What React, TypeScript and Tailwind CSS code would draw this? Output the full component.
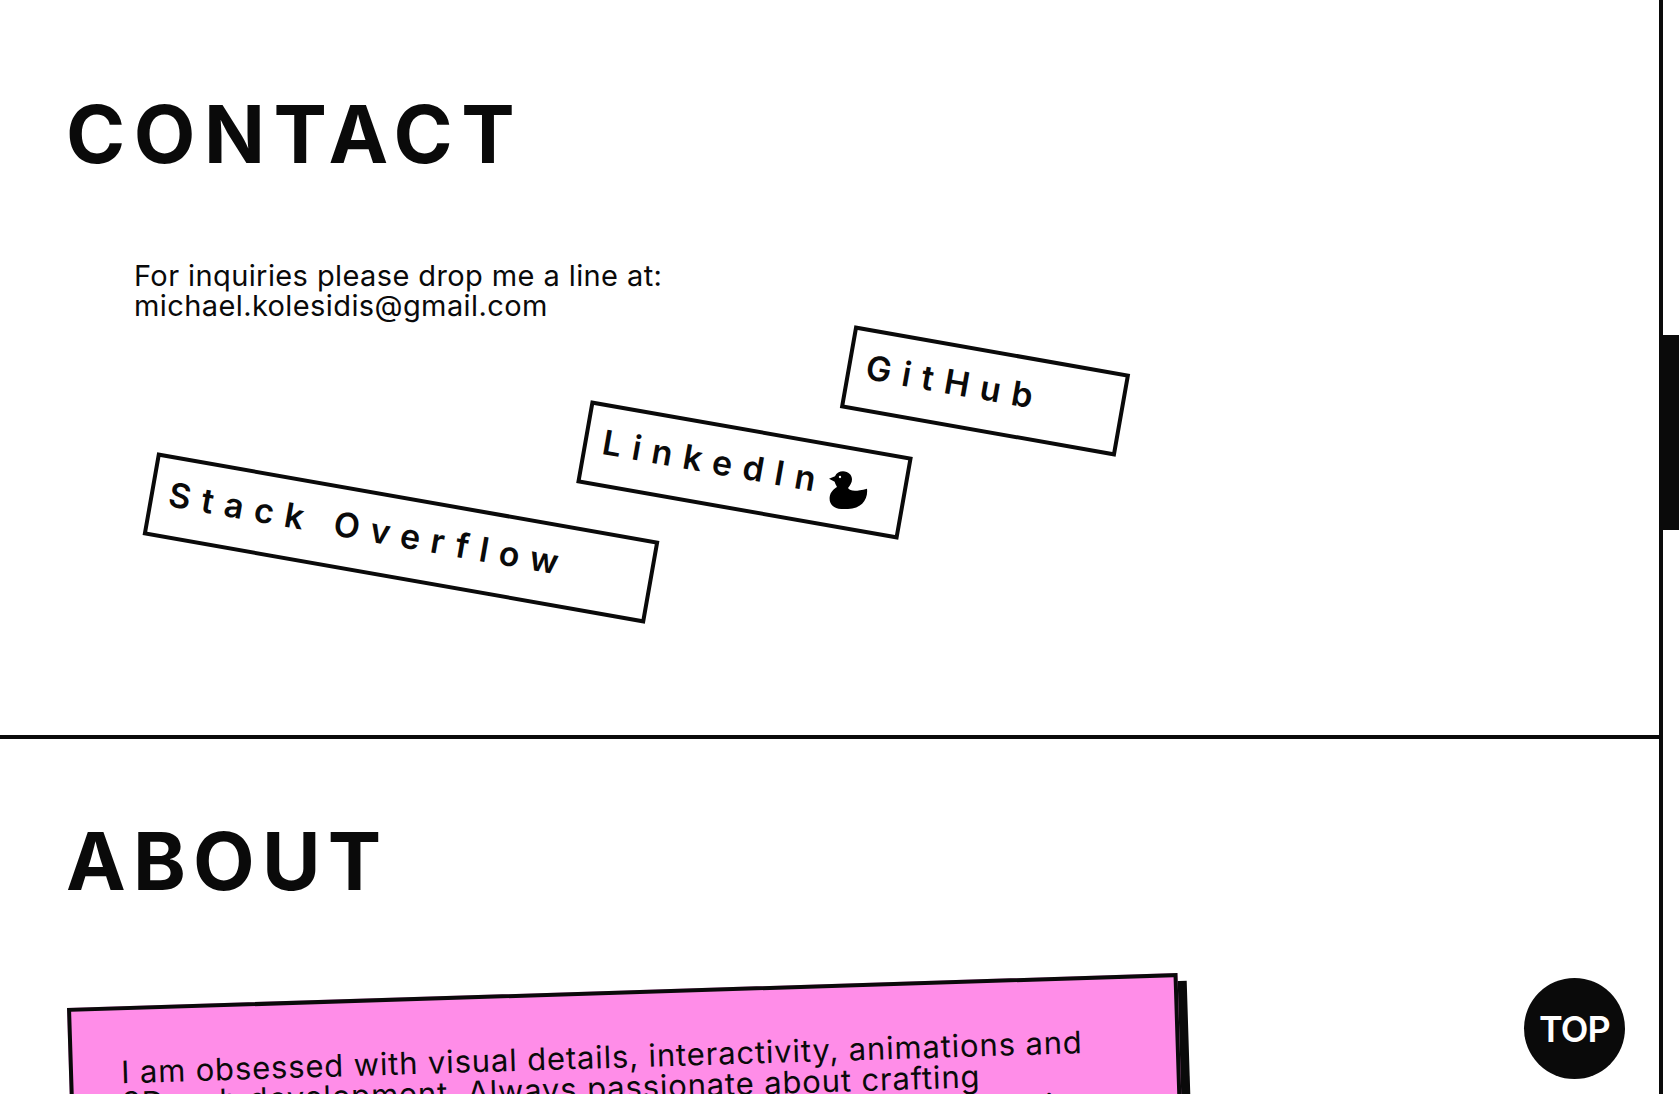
const bodyFont = "font-['Inter',sans-serif]";

function Duck() {
  return (
    <svg viewBox="145 90 120 118" className="absolute left-[828px] top-[470px] h-10 w-10">
      <path
        d="M148 115 L166 108 C170 98 180 93 190 93 C206 93 217 104 217 117 C217 127 212 135 205 143 C212 152 225 155 262 145 C266 178 245 205 205 206 L185 206 C160 204 148 190 150 170 C152 155 162 146 172 140 C168 132 166 128 165 124 Z"
        fill="#000"
      />
      <circle cx="181" cy="110" r="3.5" fill="#fff" />
    </svg>
  );
}

const links = [
  { label: 'GitHub', className: 'order-3 w-[280px] -ml-[63px] mt-0' },
  { label: 'LinkedIn', className: 'order-2 w-[327px] -ml-[75px] mt-[79px]' },
  { label: 'Stack Overflow', className: 'order-1 w-[510px] ml-[78px] mt-[147px]' },
];

export default function App() {
  return (
    <div className={`relative h-[1094px] overflow-hidden bg-white text-[#0a0a0a] ${bodyFont}`}>
      <main className="h-full w-[1663px] border-r-4 border-[#0a0a0a]">
        <section className="h-[739px] border-b-4 border-[#0a0a0a] px-[68px] pt-[88px]">
          <h2 className="-ml-[2px] text-[80px] font-bold leading-[92px] tracking-[8.6px]">CONTACT</h2>
          <p className="ml-[66px] mt-[81px] text-[29px] leading-[30px] tracking-[0.4px]">
            For inquiries please drop me a line at:
            <br />
            michael.kolesidis@gmail.com
          </p>
          <div className="mt-[28px] flex items-start">
            {links.map((link) => (
              <a
                key={link.label}
                href="#"
                className={`${link.className} block h-[84px] rotate-[10deg] border-4 border-[#0a0a0a] px-[15px] pt-[15px] text-[34px] font-semibold leading-[40px] tracking-[11px] whitespace-nowrap`}
              >
                {link.label}
              </a>
            ))}
          </div>
        </section>
        <section className="px-[68px] pt-[76px]">
          <h2 className="-ml-[2px] text-[80px] font-bold leading-[92px] tracking-[7.2px]">ABOUT</h2>
          <div className="relative mt-[101px] -ml-[1px] w-[1111px] -rotate-[1.8deg] origin-top-left border-4 border-[#0a0a0a] bg-[#ff8de8] px-12 pt-[46px] pb-12 text-[31px] leading-[31px] tracking-[0.85px] whitespace-nowrap shadow-[9px_8px_0_#0a0a0a]">
            <p>
              I am obsessed with visual details, interactivity, animations and
              <br />
              3D web development. Always passionate about crafting
              <br />
              immersive and playful digital experiences, and making all things
            </p>
          </div>
        </section>
      </main>
      <div className="absolute right-0 top-[335px] h-[195px] w-5 bg-[#0a0a0a]" />
      <Duck />
      <a href="#" className="absolute left-[1524px] top-[978px] flex h-[101px] w-[101px] items-center justify-center rounded-full bg-[#0a0a0a] text-[36px] font-semibold tracking-tight text-white">
        TOP
      </a>
    </div>
  );
}
